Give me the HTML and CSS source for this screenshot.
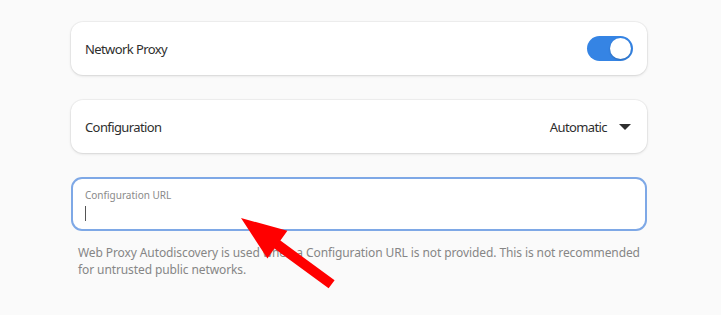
FILE: index.html
```html
<!DOCTYPE html>
<html lang="en">
<head>
    <meta charset="UTF-8">
    <meta name="viewport" content="width=device-width, initial-scale=1.0">
    <title>network proxy</title>
    <link rel="stylesheet" href="styles.css">
</head>
<body>
    <div id="page">
        <div class="row">
            <span class="rowTitle">Network Proxy</span>
            <span class="switch on"><span class="knob"></span></span>
        </div>

        <div class="row">
            <span class="rowTitle">Configuration</span>
            <span class="combo">Automatic <span class="caret"></span></span>
        </div>

        <div class="entry">
            <span class="entryLabel">Configuration URL</span>
            <span class="cursor"></span>
        </div>

        <p class="help">Web Proxy Autodiscovery is used when a Configuration URL is not provided. This is not recommended for untrusted public networks.</p>
    </div>

    <svg id="pointer" width="721" height="315" viewBox="0 0 721 315">
        <polygon fill="#ff0000" points="241,218 287.4,230.8 280.4,240.6 334.6,280.2 328.6,288.2 274.4,248.6 267.4,258.4"/>
    </svg>
</body>
</html>
```

FILE: styles.css
```css
body {
    margin: 0;
    background: #fafafa;
    font-family: 'Noto Sans', sans-serif;
    color: #2e2e2e;
}
#page {
    width: 576px;
    padding: 22px 0 0 71px;
    display: flex;
    flex-direction: column;
}
.row {
    height: 53px;
    box-sizing: border-box;
    padding: 0 14px;
    margin-bottom: 25px;
    display: flex;
    align-items: center;
    justify-content: space-between;
    background: #ffffff;
    border-radius: 12px;
    box-shadow: 0 0 0 1px rgba(0, 0, 0, 0.04), 0 1px 3px rgba(0, 0, 0, 0.12);
    font-size: 13px;
    letter-spacing: -0.6px;
}
.row + .row {
    margin-bottom: 24px;
}
.switch {
    width: 46px;
    height: 25px;
    border-radius: 13px;
    background: #3584e4;
    display: flex;
    align-items: center;
    justify-content: flex-end;
    padding: 0 2px;
    box-sizing: border-box;
}
.knob {
    width: 21px;
    height: 21px;
    border-radius: 50%;
    background: #ffffff;
    box-shadow: 0 1px 2px rgba(0, 0, 0, 0.2);
}
.combo {
    display: flex;
    align-items: center;
    gap: 12px;
    margin-right: 2px;
}
.caret {
    width: 0;
    height: 0;
    border-left: 6px solid transparent;
    border-right: 6px solid transparent;
    border-top: 6px solid #2e2e2e;
}
.entry {
    height: 54px;
    box-sizing: border-box;
    border: 2px solid #7ea8e6;
    border-radius: 11px;
    background: #ffffff;
    padding: 9px 12px 0;
    display: flex;
    flex-direction: column;
    align-items: flex-start;
}
.entryLabel {
    font-size: 10px;
    color: #8a8a8a;
    line-height: 14px;
}
.cursor {
    width: 1px;
    height: 15px;
    margin-top: 4px;
    background: #555555;
}
.help {
    margin: 13px 0 0 7px;
    width: 575px;
    font-size: 12px;
    letter-spacing: -0.1px;
    line-height: 17px;
    color: #868686;
}
#pointer {
    position: absolute;
    left: 0;
    top: 0;
}
```
